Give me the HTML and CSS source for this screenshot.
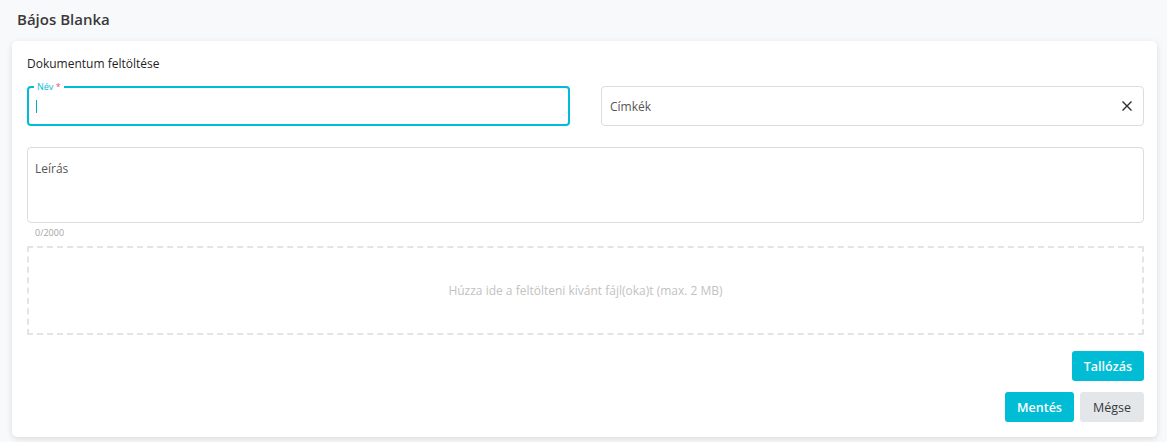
FILE: index.html
```html
<!DOCTYPE html>
<html lang="hu">
<head>
    <meta charset="UTF-8" />
    <meta name="viewport" content="width=device-width, initial-scale=1.0" />
    <title>Dokumentum feltöltése</title>
    <link rel="stylesheet" href="styles.css">
</head>
<body>
    <div class="page-title">Bájos Blanka</div>

    <div class="card">
      <h2 class="card-title">Dokumentum feltöltése</h2>

      <div class="row">
        <div class="field field-active">
          <span class="field-label">Név <span class="req">*</span></span>
          <span class="caret"></span>
        </div>
        <div class="field">
          <span class="placeholder">Címkék</span>
          <svg class="clear-icon" width="12" height="12" viewBox="0 0 12 12">
            <path d="M1.5 1.5 L10.5 10.5 M10.5 1.5 L1.5 10.5" stroke="#2b2b2b" stroke-width="1.4" fill="none"/>
          </svg>
        </div>
      </div>

      <div class="textarea">
        <span class="placeholder">Leírás</span>
      </div>
      <div class="counter">0/2000</div>

      <div class="dropzone">Húzza ide a feltölteni kívánt fájl(oka)t (max. 2 MB)</div>

      <div class="actions">
        <button class="btn btn-primary">Tallózás</button>
      </div>
      <div class="actions actions-bottom">
        <button class="btn btn-primary">Mentés</button>
        <button class="btn btn-grey">Mégse</button>
      </div>
    </div>
</body>
</html>
```

FILE: styles.css
```css
* {
  margin: 0;
  padding: 0;
  box-sizing: border-box;
}

body {
  font-family: "Open Sans", "Liberation Sans", sans-serif;
  background-color: #f8f9fb;
  color: #333;
  height: 100vh;
  overflow: hidden;
  padding: 0 10px 0 12px;
}

.page-title {
  height: 41px;
  padding: 9px 0 0 5px;
  font-size: 15px;
  font-weight: 600;
  color: #3a3a3a;
}

.card {
  background: #ffffff;
  border-radius: 5px;
  box-shadow: 0 2px 6px rgba(0, 0, 0, 0.12);
  padding: 15px 13px 15px 15px;
}

.card-title {
  font-size: 12px;
  font-weight: 500;
  color: #1f1f1f;
  line-height: 16px;
  margin-bottom: 14px;
}

.row {
  display: grid;
  grid-template-columns: 1fr 1fr;
  gap: 31px;
}

.field {
  position: relative;
  height: 40px;
  border: 1px solid #dcdcdc;
  border-radius: 4px;
  display: flex;
  align-items: center;
  justify-content: space-between;
  padding: 0 9px 0 8px;
}

.field-active {
  border: 2px solid #00bcd4;
  padding: 0 7px;
}

.field-label {
  position: absolute;
  top: -7px;
  left: 5px;
  background: #ffffff;
  padding: 0 3px;
  font-size: 9px;
  line-height: 11px;
  color: #00bcd4;
}

.req {
  color: #f0506e;
}

.caret {
  display: block;
  width: 1px;
  height: 13px;
  background: #00acc1;
}

.placeholder {
  font-size: 12px;
  color: #555;
}

.clear-icon {
  margin-right: 1px;
}

.textarea {
  margin-top: 21px;
  height: 76px;
  border: 1px solid #dcdcdc;
  border-radius: 4px;
  padding: 8px 7px;
}

.counter {
  font-size: 9px;
  color: #a5a5a5;
  padding: 3px 8px 0;
  height: 23px;
}

.dropzone {
  height: 89px;
  border: 2px dashed #e2e4e7;
  display: flex;
  align-items: center;
  justify-content: center;
  font-size: 12px;
  color: #c2c2c2;
}

.actions {
  display: flex;
  justify-content: flex-end;
  gap: 6px;
  margin-top: 16px;
}

.actions-bottom {
  margin-top: 11px;
}

.btn {
  font-family: inherit;
  height: 30px;
  border: none;
  border-radius: 3px;
  padding: 0 12px;
  font-size: 12.5px;
  cursor: pointer;
}

.btn-primary {
  background: #00bcd4;
  color: #ffffff;
  font-weight: 600;
}

.btn-grey {
  background: #e4e7ea;
  color: #3a3a3a;
  padding: 0 13px;
}
```
